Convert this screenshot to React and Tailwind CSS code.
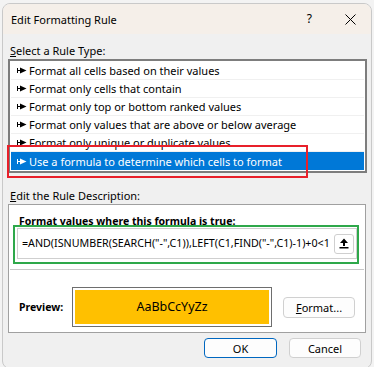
import React from "react";

function Pin({ white }) {
  const c = white ? "#ffffff" : "#000000";
  return (
    <svg width="10" height="7" viewBox="0 0 10 7" className="shrink-0">
      <rect x="0" y="1" width="1" height="5" fill={c} />
      <rect x="0" y="3" width="4" height="1" fill={c} />
      <path d="M3 0.5 L9.5 3.5 L3 6.5 Z" fill={c} />
    </svg>
  );
}

const items = [
  "Format all cells based on their values",
  "Format only cells that contain",
  "Format only top or bottom ranked values",
  "Format only values that are above or below average",
  "Format only unique or duplicate values",
  "Use a formula to determine which cells to format",
];

export default function App() {
  return (
    <div className="w-[374px] h-[367px] bg-[#f3f3f3] overflow-hidden text-[11px] text-black font-['Noto_Sans',sans-serif] leading-none">
      <div className="relative ml-[2px] mt-[3px] w-[370px] h-[366px] rounded-lg border border-[#c9c9c9] bg-[#f0f0f0] overflow-hidden">
        {/* title bar */}
        <div className="h-[30px] bg-[#f5efe9] flex items-center pl-[8px]">
          <span className="flex-1 text-[11px]">Edit Formatting Rule</span>
          <span className="text-[12px] mr-[33px]">?</span>
          <svg width="11" height="11" viewBox="0 0 11 11" className="mr-[15px]">
            <path d="M0.5 0.5 L10.5 10.5 M10.5 0.5 L0.5 10.5" stroke="#000" strokeWidth="1" />
          </svg>
        </div>

        {/* body */}
        <div className="px-[5px]">
          <div className="mt-[8px] pl-[2px] h-[16px] flex items-center">
            <span><span className="underline">S</span>elect a Rule Type:</span>
          </div>

          <div className="mt-[1px] w-[359px] border-2 border-[#7d7d7d] bg-white p-px">
            {items.map((t, i) => {
              const sel = i === items.length - 1;
              return (
                <div
                  key={t}
                  className={
                    "h-[18px] flex items-center gap-[2px] pl-[6px] " +
                    (sel ? "bg-[#0078d7] text-white" : "border-b border-[#f0f0f0]")
                  }
                >
                  <Pin white={sel} />
                  <span>{t}</span>
                </div>
              );
            })}
          </div>

          <div className="mt-[14px] pl-[2px] h-[16px] flex items-center">
            <span><span className="underline">E</span>dit the Rule Description:</span>
          </div>

          <div className="mt-[1px] w-[358px] h-[129px] border border-[#a0a0a0] bg-white flex flex-col">
            <div className="mt-[9px] h-[14px] pl-[10px] flex items-center font-bold text-[10.5px]">Format values where this formula is true:</div>
            <div className="mx-[8px] h-[31px] border border-[#cfcfcf] flex items-center pl-[4px] pr-[2px]">
              <div className="flex-1 overflow-hidden whitespace-nowrap text-[10.7px] text-[#000]">
                =AND(ISNUMBER(SEARCH("-",C1)),LEFT(C1,FIND("-",C1)-1)+0&lt;1
              </div>
              <div className="w-[20px] h-[20px] rounded-[3px] border border-[#cfcfcf] bg-white flex items-center justify-center shrink-0">
                <svg width="10" height="11" viewBox="0 0 10 11">
                  <path d="M5 0.5 L9 5 L6 5 L6 8 L4 8 L4 5 L1 5 Z" fill="#000" />
                  <rect x="0.5" y="9" width="9" height="1.5" fill="#000" />
                </svg>
              </div>
            </div>
            <div className="mx-[1px] mt-[10px] h-px bg-[#c8c8c8]" />
            <div className="flex items-center mt-[17px] pl-[10px]">
              <span className="font-bold text-[10.5px] w-[53px]">Preview:</span>
              <div className="w-[200px] h-[40px] border border-[#6e6e6e] p-[2px] bg-white">
                <div className="w-full h-full bg-[#ffc000] flex items-center justify-center text-[12.5px]">AaBbCcYyZz</div>
              </div>
              <div className="ml-[11px] w-[72px] h-[21px] rounded-[4px] border border-[#d0d0d0] bg-[#fdfdfd] flex items-center justify-center">
                <span><span className="underline">F</span>ormat...</span>
              </div>
            </div>
          </div>

          <div className="mt-[5px] flex justify-end gap-[12px] pr-[5px]">
            <div className="w-[73px] h-[20px] rounded-[4px] border border-[#0067c0] bg-[#fdfdfd] flex items-center justify-center">OK</div>
            <div className="w-[72px] h-[20px] rounded-[4px] border border-[#d0d0d0] bg-[#fdfdfd] flex items-center justify-center">Cancel</div>
          </div>
        </div>

        {/* annotations */}
        <div className="absolute left-[4px] top-[141px] w-[301px] h-[33px] border-2 border-[#e8202a]" />
        <div className="absolute left-[10px] top-[221px] w-[346px] h-[39px] border-2 border-[#2ea84a]" />
      </div>
    </div>
  );
}
